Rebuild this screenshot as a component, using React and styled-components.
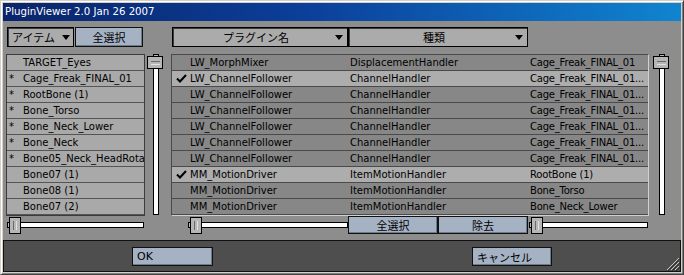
import React from 'react'
import styled, { createGlobalStyle } from 'styled-components'

const GlobalStyle = createGlobalStyle`
  html, body {
    margin: 0;
    padding: 0;
    background: #8d8d8d;
  }
  body {
    font-family: "DejaVu Sans", "Noto Sans CJK JP", sans-serif;
    font-size: 10px;
    color: #000;
  }
  * { box-sizing: border-box; }
`

const Window = styled.div`
  width: 684px;
  height: 275px;
  background: #d4d0c8;
  border: 1px solid;
  border-color: #d4d0c8 #404040 #404040 #d4d0c8;
  box-shadow: inset 1px 1px #fff, inset -1px -1px #808080;
  padding: 2px;
  display: flex;
  flex-direction: column;
  overflow: hidden;
`

const TitleBar = styled.div`
  height: 18px;
  flex: none;
  background: linear-gradient(to right, #0a246a 0%, #0b3f9a 45%, #1084d0 100%);
  color: #fff;
  font-size: 10.2px;
  line-height: 18px;
  padding-left: 2px;
  white-space: nowrap;
`

const Body = styled.div`
  flex: 1;
  background: #8d8d8d;
  display: flex;
  flex-direction: column;
`

const TopRow = styled.div`
  display: flex;
  height: 20px;
  margin: 6px 0 7px 4px;
`

const DropButton = styled.div`
  width: ${p => p.$w}px;
  margin-left: ${p => p.$ml || 0}px;
  height: 20px;
  display: flex;
  align-items: center;
  padding: 0 ${p => p.$pr || 4}px 0 4px;
  background: #ababab;
  border: 1px solid #000;
  box-shadow: inset 1px 1px #3c3c3c;
  font-size: 11px;
  white-space: nowrap;
`

const DropLabel = styled.span`
  flex: 1;
  text-align: ${p => (p.$center ? 'center' : 'left')};
`

const Arrow = styled.span`
  width: 0;
  height: 0;
  border-left: 4px solid transparent;
  border-right: 4px solid transparent;
  border-top: 5px solid #000;
  margin-left: auto;
`

const BlueButton = styled.div`
  width: ${p => p.$w}px;
  margin-left: ${p => p.$ml || 0}px;
  height: ${p => p.$h || 20}px;
  display: flex;
  align-items: center;
  justify-content: ${p => (p.$left ? 'flex-start' : 'center')};
  padding-left: ${p => (p.$left ? 4 : 0)}px;
  background: #a5b2c4;
  border: 1px solid #111;
  box-shadow: inset -1px -1px #6f7a88;
  font-size: 11px;
  white-space: nowrap;
  flex: none;
`

const ListRow = styled.div`
  display: flex;
  height: 162px;
  padding-left: 3px;
`

const LeftList = styled.div`
  width: 139px;
  border: 1px solid #3c3c3c;
  background: #a9a9a9;
  overflow: hidden;
`

const LeftItem = styled.div`
  height: 16px;
  line-height: 15px;
  border-bottom: 1px solid #555;
  display: flex;
  padding-left: 2px;
  white-space: nowrap;
  overflow: hidden;
`

const Star = styled.span`
  width: 14px;
  flex: none;
`

const VScroll = styled.div`
  width: 16px;
  margin-left: ${p => p.$ml}px;
  display: flex;
  flex-direction: column;
  align-items: center;
  padding-bottom: 1px;
`

const VBump = styled.div`
  width: 6px;
  height: 2px;
  margin-left: 1px;
  border: 1px solid #000;
  border-bottom: none;
  background: #b8b8b8;
`

const VThumb = styled.div`
  width: 16px;
  height: 13px;
  background: #b6b6b6;
  border: 1px solid #000;
  display: flex;
  align-items: center;
  justify-content: center;
  &::after {
    content: '';
    width: 9px;
    height: 2px;
    border-top: 1px solid #6a6a6a;
    border-bottom: 1px solid #e0e0e0;
  }
`

const VTrack = styled.div`
  flex: 1;
  width: 6px;
  margin-left: 1px;
  background: #fff;
  border: 1px solid #000;
  border-top: none;
`

const MainList = styled.div`
  width: 478px;
  margin-left: 8px;
  border: 1px solid;
  border-color: #4a4a4a #d0d0d0 #d0d0d0 #4a4a4a;
  overflow: hidden;
`

const MainItem = styled.div`
  height: 16px;
  display: grid;
  grid-template-columns: 18px 160px 180px 1fr;
  background: ${p => (p.$checked ? '#adadad' : '#878787')};
  border-bottom: 1px solid #4a4a4a;
  white-space: nowrap;
`

const Cell = styled.span`
  display: block;
  line-height: 15px;
  height: 15px;
  overflow: hidden;
  letter-spacing: ${p => (p.$tight ? '-0.2px' : '0')};
`

const CheckCell = styled.span`
  display: flex;
  align-items: center;
  height: 15px;
  padding-left: 4px;
`

const SliderRow = styled.div`
  display: flex;
  align-items: center;
  height: 18px;
`

const Slider = styled.div`
  width: ${p => p.$w}px;
  margin-left: ${p => p.$ml}px;
  height: 18px;
  display: flex;
  align-items: center;
  flex: none;
`

const HBump = styled.div`
  width: 2px;
  height: 6px;
  border: 1px solid #000;
  border-right: none;
  background: #b8b8b8;
`

const HThumb = styled.div`
  width: 12px;
  height: 17px;
  background: #b6b6b6;
  border: 1px solid #000;
  display: flex;
  align-items: center;
  justify-content: center;
  &::after {
    content: '';
    width: 2px;
    height: 9px;
    border-left: 1px solid #6a6a6a;
    border-right: 1px solid #e0e0e0;
  }
`

const HTrack = styled.div`
  flex: 1;
  height: 6px;
  background: #fff;
  border: 1px solid #000;
  border-left: none;
`

const BottomPanel = styled.div`
  margin-top: 6px;
  height: 32px;
  background: #4e4e4e;
  border: 1px solid #111;
  display: flex;
  align-items: flex-start;
  padding-top: 6px;
`

const Grip = styled.svg`
  margin-left: auto;
  align-self: flex-end;
  flex: none;
`

const leftItems = [
  ['', 'TARGET_Eyes'],
  ['*', 'Cage_Freak_FINAL_01'],
  ['*', 'RootBone (1)'],
  ['*', 'Bone_Torso'],
  ['*', 'Bone_Neck_Lower'],
  ['*', 'Bone_Neck'],
  ['*', 'Bone05_Neck_HeadRota'],
  ['', 'Bone07 (1)'],
  ['', 'Bone08 (1)'],
  ['', 'Bone07 (2)'],
]

const cf = ['LW_ChannelFollower', 'ChannelHandler', 'Cage_Freak_FINAL_01...']
const mainItems = [
  { cols: ['LW_MorphMixer', 'DisplacementHandler', 'Cage_Freak_FINAL_01'] },
  { checked: true, cols: cf },
  { cols: cf },
  { cols: cf },
  { cols: cf },
  { cols: cf },
  { cols: cf },
  { checked: true, cols: ['MM_MotionDriver', 'ItemMotionHandler', 'RootBone (1)'] },
  { cols: ['MM_MotionDriver', 'ItemMotionHandler', 'Bone_Torso'] },
  { cols: ['MM_MotionDriver', 'ItemMotionHandler', 'Bone_Neck_Lower'] },
]

const Check = () => (
  <svg width="11" height="9" viewBox="0 0 11 9">
    <polyline points="1,4.5 4,7.5 10,1" fill="none" stroke="#000" strokeWidth="2" />
  </svg>
)

const VBar = ({ ml }) => (
  <VScroll $ml={ml}>
    <VBump />
    <VThumb />
    <VTrack />
  </VScroll>
)

const HBar = ({ w, ml }) => (
  <Slider $w={w} $ml={ml}>
    <HBump />
    <HThumb />
    <HTrack />
  </Slider>
)

export default function App() {
  return (
    <>
      <GlobalStyle />
      <Window>
        <TitleBar>PluginViewer 2.0 Jan 26 2007</TitleBar>
        <Body>
          <TopRow>
            <DropButton $w={67} $pr={3}>
              <DropLabel>アイテム</DropLabel>
              <Arrow />
            </DropButton>
            <BlueButton $w={68} $ml={1}>全選択</BlueButton>
            <DropButton $w={176} $ml={29}>
              <DropLabel $center>プラグイン名</DropLabel>
              <Arrow />
            </DropButton>
            <DropButton $w={180}>
              <DropLabel $center>種類</DropLabel>
              <Arrow />
            </DropButton>
          </TopRow>

          <ListRow>
            <LeftList>
              {leftItems.map(([s, t], i) => (
                <LeftItem key={i}>
                  <Star>{s}</Star>
                  {t}
                </LeftItem>
              ))}
            </LeftList>
            <VBar ml={2} />
            <MainList>
              {mainItems.map((row, i) => (
                <MainItem key={i} $checked={row.checked}>
                  <CheckCell>{row.checked && <Check />}</CheckCell>
                  <Cell>{row.cols[0]}</Cell>
                  <Cell>{row.cols[1]}</Cell>
                  <Cell $tight>{row.cols[2]}</Cell>
                </MainItem>
              ))}
            </MainList>
            <VBar ml={4} />
          </ListRow>

          <SliderRow>
            <HBar w={137} ml={4} />
            <HBar w={160} ml={44} />
            <BlueButton $w={90} $h={18}>全選択</BlueButton>
            <BlueButton $w={90} $h={18}>除去</BlueButton>
            <HBar w={119} ml={1} />
          </SliderRow>

          <BottomPanel>
            <BlueButton $w={81} $h={19} $ml={128} $left>OK</BlueButton>
            <BlueButton $w={80} $h={19} $ml={259} $left>キャンセル</BlueButton>
            <Grip width="14" height="14" viewBox="0 0 14 14">
              <g strokeWidth="1">
                <line x1="13" y1="1" x2="1" y2="13" stroke="#c8c8c8" />
                <line x1="14" y1="2" x2="2" y2="14" stroke="#303030" />
                <line x1="13" y1="5" x2="5" y2="13" stroke="#c8c8c8" />
                <line x1="14" y1="6" x2="6" y2="14" stroke="#303030" />
                <line x1="13" y1="9" x2="9" y2="13" stroke="#c8c8c8" />
                <line x1="14" y1="10" x2="10" y2="14" stroke="#303030" />
              </g>
            </Grip>
          </BottomPanel>
        </Body>
      </Window>
    </>
  )
}
